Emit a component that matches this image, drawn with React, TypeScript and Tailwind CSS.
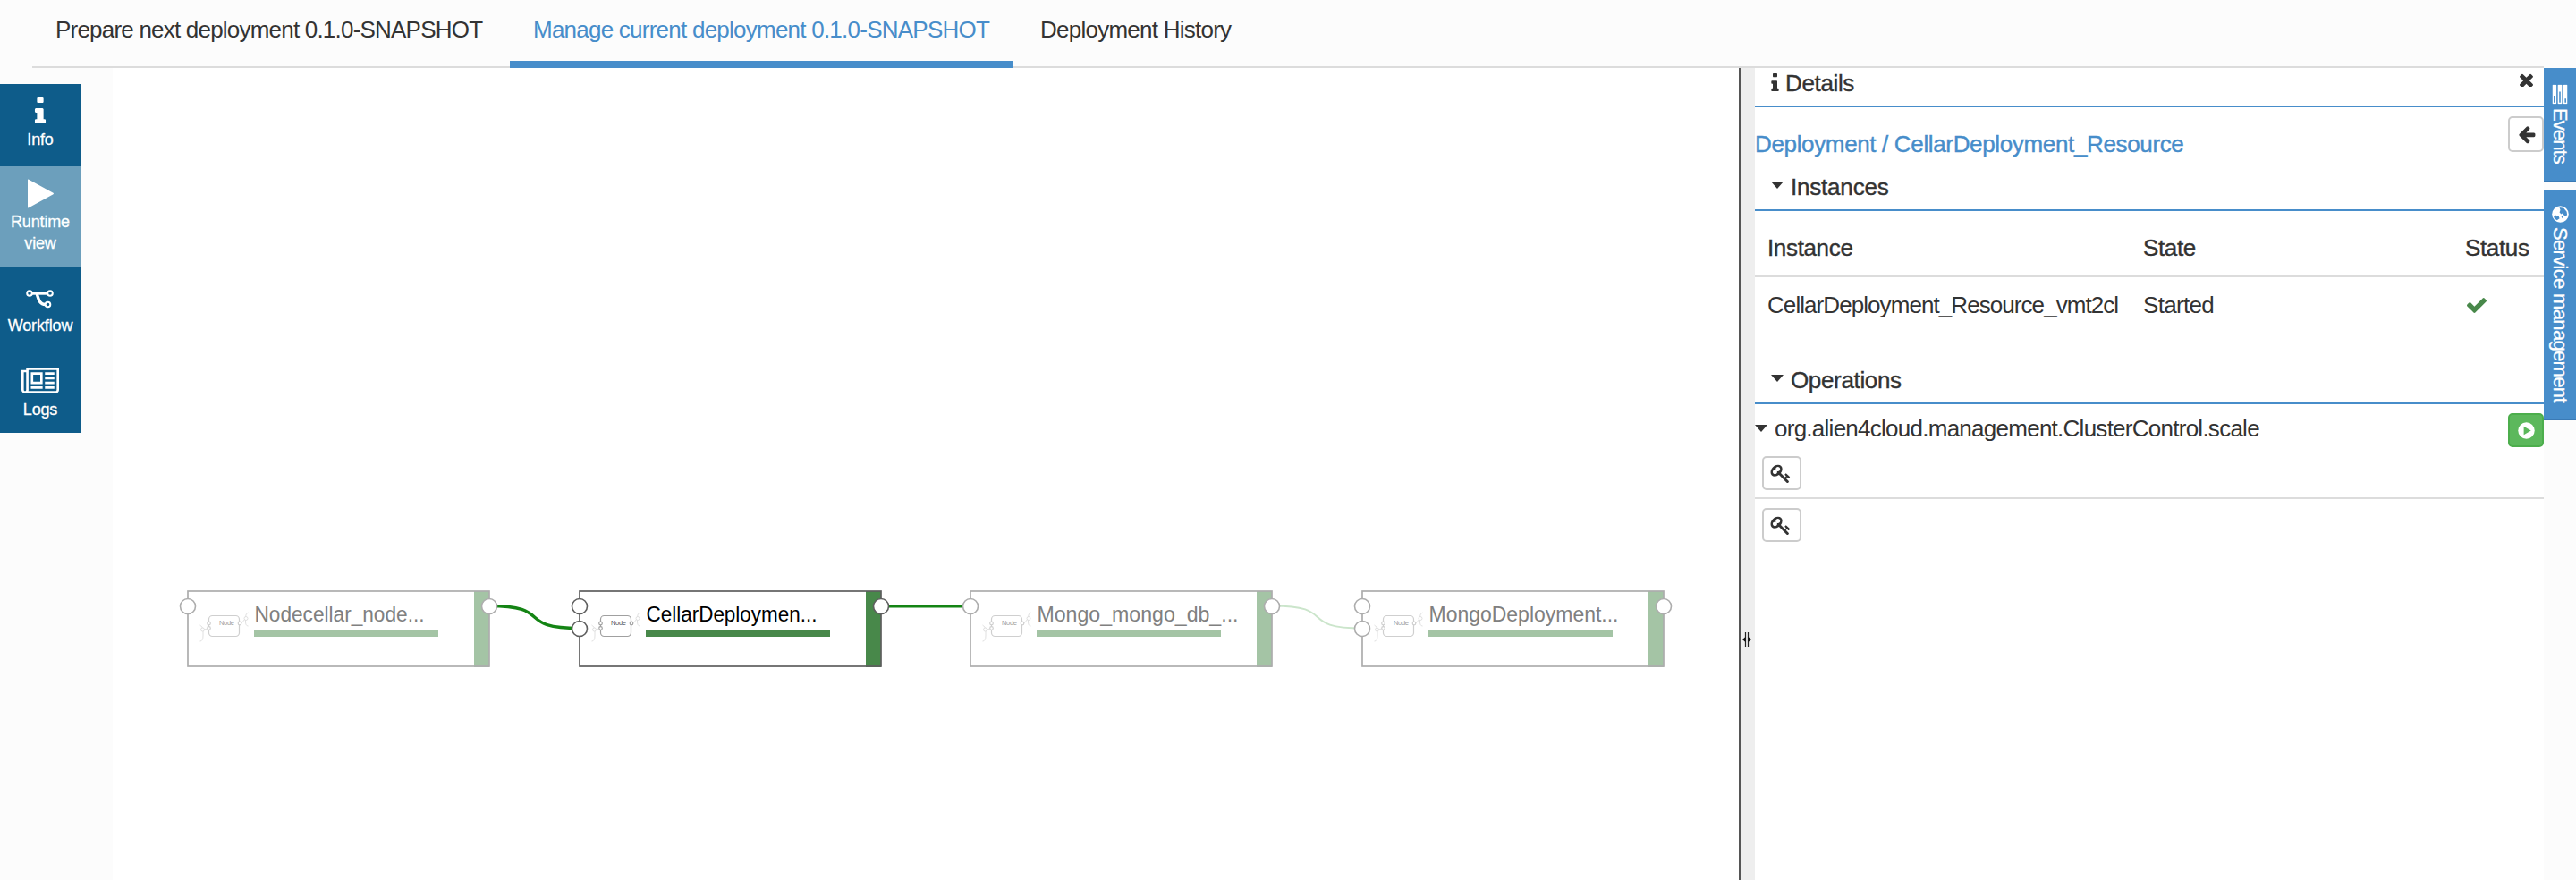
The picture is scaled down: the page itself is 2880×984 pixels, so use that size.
import React from "react";

type IconProps = { d: string; box?: string; className: string };

function Glyph({ d, box = "0 0 1792 1792", className }: IconProps) {
  return (
    <svg viewBox={box} className={className} fill="currentColor" aria-hidden="true">
      <path d={d} />
    </svg>
  );
}

const ICON = {
  info: "M640 1344v128q0 26-19 45t-45 19h-512q-26 0-45-19t-19-45v-128q0-26 19-45t45-19h64v-384h-64q-26 0-45-19t-19-45v-128q0-26 19-45t45-19h384q26 0 45 19t19 45v576h64q26 0 45 19t19 45zM512 64v192q0 26-19 45t-45 19h-256q-26 0-45-19t-19-45v-192q0-26 19-45t45-19h256q26 0 45 19t19 45z",
  close: "M1490 1322q0 40-28 68l-136 136q-28 28-68 28t-68-28l-294-294-294 294q-28 28-68 28t-68-28l-136-136q-28-28-28-68t28-68l294-294-294-294q-28-28-28-68t28-68l136-136q28-28 68-28t68 28l294 294 294-294q28-28 68-28t68 28l136 136q28 28 28 68t-28 68l-294 294 294 294q28 28 28 68z",
  back: "M1664 896v128q0 53-32.5 90.5t-84.5 37.5h-704l293 294q38 36 38 90t-38 90l-75 76q-37 37-90 37-52 0-91-37l-651-652q-37-37-37-90 0-52 37-91l651-650q38-38 91-38 52 0 90 38l75 74q38 38 38 91t-38 91l-293 293h704q52 0 84.5 37.5t32.5 90.5z",
  check: "M1671 566q0 40-28 68l-724 724-136 136q-28 28-68 28t-68-28l-136-136-362-362q-28-28-28-68t28-68l136-136q28-28 68-28t68 28l294 295 656-657q28-28 68-28t68 28l136 136q28 28 28 68z",
  play: "M1576 927l-1328 738q-23 13-39.5 3t-16.5-36v-1472q0-26 16.5-36t39.5 3l1328 738q23 13 23 31t-23 31z",
  news: "M1024 512h-384v384h384v-384zm128 640v128h-640v-128h640zm0-768v640h-640v-640h640zm640 768v128h-512v-128h512zm0-256v128h-512v-128h512zm0-256v128h-512v-128h512zm0-256v128h-512v-128h512zm-1536 960v-960h-128v960q0 26 19 45t45 19 45-19 19-45zm1664 0v-1088h-1536v1088q0 33-11 64h1483q26 0 45-19t19-45zm128-1216v1216q0 80-56 136t-136 56h-1664q-80 0-136-56t-56-136v-1088h256v-128h1792z",
  tasks: "M1024 1408h640v-128h-640v128zm-384-512h1024v-128h-1024v128zm640-512h384v-128h-384v128zm512 832v256q0 26-19 45t-45 19h-1664q-26 0-45-19t-19-45v-256q0-26 19-45t45-19h1664q26 0 45 19t19 45zm0-512v256q0 26-19 45t-45 19h-1664q-26 0-45-19t-19-45v-256q0-26 19-45t45-19h1664q26 0 45 19t19 45zm0-512v256q0 26-19 45t-45 19h-1664q-26 0-45-19t-19-45v-256q0-26 19-45t45-19h1664q26 0 45 19t19 45z",
  key: "M832 512q0-80-56-136t-136-56-136 56-56 136q0 42 19 83-41-19-83-19-80 0-136 56t-56 136 56 136 136 56 136-56 56-136q0-42-19-83 41 19 83 19 80 0 136-56t56-136zm851 704q0 17-49 66t-66 49q-9 0-28.5-16t-36.5-33-38.5-40-24.5-26l-96 96 220 220q28 28 28 68 0 42-39 81t-81 39q-40 0-68-28l-671-671q-176 131-365 131-163 0-265.5-102.5t-102.5-265.5q0-160 95-313t248-248 313-95q163 0 265.5 102.5t102.5 265.5q0 189-131 365l355 355 96-96q-3-3-26-24.5t-40-38.5-33-36.5-16-28.5q0-17 49-66t66-49q13 0 23 10 6 6 46 44.5t82 79.5 86.5 86 73 78 28.5 41z",
};

function Header() {
  return (
    <header className="flex h-[76px] bg-[#fcfcfc] pl-[36px] pr-[36px]">
      <nav className="flex flex-1 border-b-2 border-[#dcdcdc] text-[26px] leading-[30px]">
        <a className="w-[534px] whitespace-nowrap pl-[26px] pt-[18px] tracking-[-0.79px]">Prepare next deployment 0.1.0-SNAPSHOT</a>
        <a className="-mb-[2px] w-[562px] whitespace-nowrap border-b-8 border-[#478dca] pl-[26px] pt-[18px] tracking-[-0.76px] text-[#478dca]">Manage current deployment 0.1.0-SNAPSHOT</a>
        <a className="whitespace-nowrap pl-[31px] pt-[18px] tracking-[-0.75px]">Deployment History</a>
      </nav>
    </header>
  );
}

function Sidebar() {
  return (
    <aside className="w-[126px] shrink-0 bg-[#fcfcfc] pt-[18px]">
      <ul className="flex w-[90px] flex-col bg-[#0e5c8a] text-center text-[18px] leading-[24px] tracking-[-0.15px] text-white [-webkit-text-stroke:0.3px_#fff]">
        <li className="flex h-[92px] flex-col items-center pt-[15px]">
          <Glyph d={ICON.info} box="0 0 640 1536" className="h-[29px] w-[14px]" />
          <span className="mt-[6px]">Info</span>
        </li>
        <li className="flex h-[112px] flex-col items-center bg-[#6c9fbc] pt-[14px]">
          <Glyph d={ICON.play} box="192 100 1408 1592" className="h-[33px] w-[29px]" />
          <span className="mt-[3px]">Runtime<br />view</span>
        </li>
        <li className="flex h-[96px] flex-col items-center pt-[25px]">
          <svg viewBox="0 0 32 22" className="h-[22px] w-[32px]" fill="none" stroke="currentColor" strokeWidth="2">
            <circle cx="4" cy="5" r="2.8" />
            <circle cx="27" cy="5" r="2.8" />
            <circle cx="24.5" cy="17.5" r="2.8" />
            <path d="M7 5H24" strokeWidth="3.4" />
            <path d="M11 5C14 5 12.5 17.5 21.5 17.5" strokeWidth="3.4" />
          </svg>
          <span className="mt-[7px]">Workflow</span>
        </li>
        <li className="flex h-[90px] flex-col items-center pt-[17px]">
          <Glyph d={ICON.news} box="0 128 2048 1408" className="h-[29px] w-[42px]" />
          <span className="mt-[6px]">Logs</span>
        </li>
      </ul>
    </aside>
  );
}

type TopologyNode = { name: string; x: number; active?: boolean; ports: number; nameWidth: number };

const NODES: TopologyNode[] = [
  { name: "Nodecellar_node...", x: 210, ports: 1, nameWidth: 190 },
  { name: "CellarDeploymen...", x: 648, ports: 2, active: true, nameWidth: 191 },
  { name: "Mongo_mongo_db_...", x: 1085, ports: 1, nameWidth: 225 },
  { name: "MongoDeployment...", x: 1523, ports: 2, nameWidth: 212 },
];

function NodeFigure({ node }: { node: TopologyNode }) {
  const line = node.active ? "#5f5f5f" : "#adadad";
  const green = node.active ? "#48884a" : "#a4c4a5";
  const thin = node.active ? "#a0a0a0" : "#cfcfcf";
  return (
    <g transform={`translate(${node.x} 661)`}>
      <rect x="320" y="0" width="17" height="85" fill={green} />
      <rect x="0" y="0" width="337" height="84" fill="none" stroke={line} strokeWidth="1.7" />
      <g fill="none" stroke={thin} strokeWidth="1.2">
        <rect x="23.5" y="27.5" width="34" height="23" rx="4" />
        <g fill="#fff">
          <circle cx="23.5" cy="36" r="1.8" />
          <circle cx="23.5" cy="41.500" r="1.8" />
          <circle cx="58" cy="36" r="1.8" />
        </g>
        <g stroke="#dcdcdc" strokeWidth="0.9">
          <path d="M22 42L18 43M13.500 38Q17 40 17 43V50Q17 56 13.500 56" />
          <circle cx="16.500" cy="43" r="2" fill="#fff" />
          <path d="M60 36L64 31M67.500 24Q64.500 25 64.500 29V34Q64.500 39 67.500 39" />
          <circle cx="65" cy="30.500" r="2" fill="#fff" />
        </g>
      </g>
      <text x="35" y="38" fontSize="7.5" fill={node.active ? "#555" : "#a0a0a0"} textLength="17">Node</text>
      <text x="74.500" y="34" fontSize="24.500" fill={node.active ? "#000" : "#808080"} textLength={node.nameWidth} lengthAdjust="spacingAndGlyphs">{node.name}</text>
      <rect x="74" y="44" width="206" height="7" fill={green} />
      {Array.from({ length: node.ports }, (_, i) => (
        <circle key={i} cx="0" cy={17 + i * 25} r="8.500" fill="#fff" stroke={line} strokeWidth="1.6" />
      ))}
      <circle cx="337" cy="17" r="8.500" fill="#fff" stroke={line} strokeWidth="1.6" />
    </g>
  );
}

function Topology() {
  return (
    <main className="w-[1818px] shrink-0 bg-white">
      <svg viewBox="126 76 1818 908" className="block h-[908px] w-[1818px]">
        <g fill="none">
          <path d="M547 677.500C620 677.500 575 702.500 648 702.500" stroke="#148414" strokeWidth="3.400" />
          <path d="M985 677.800H1086" stroke="#148414" strokeWidth="3.400" />
          <path d="M1423 677.500C1496 677.500 1450 702.500 1523 702.500" stroke="#cbe5cb" strokeWidth="2" />
        </g>
        {NODES.map((n) => (
          <NodeFigure key={n.name} node={n} />
        ))}
      </svg>
    </main>
  );
}

function Splitter() {
  return (
    <div className="flex w-[18px] shrink-0 items-start justify-center border-l-2 border-[#555] bg-[#eee] pr-[2px] pt-[630px]">
      <svg viewBox="0 0 10 18" className="h-[18px] w-[10px] shrink-0">
        <path d="M3.500 1V17M6.500 1V17" stroke="#222" strokeWidth="1.200" />
        <path d="M3.500 6L0 9L3.500 12ZM6.500 6L10 9L6.500 12Z" fill="#111" />
      </svg>
    </div>
  );
}

function Caret({ className = "" }: { className?: string }) {
  return (
    <svg viewBox="0 0 14 8" className={`h-[8px] w-[14px] shrink-0 ${className}`} fill="currentColor">
      <path d="M0 0H14L7 8Z" />
    </svg>
  );
}

function KeyButton() {
  return (
    <button className="flex h-[38px] w-[44px] items-center justify-center rounded-[5px] border-2 border-[#ccc] bg-white">
      <Glyph d={ICON.key} className="h-[23px] w-[24px] -translate-x-px" />
    </button>
  );
}

function Details() {
  return (
    <section className="flex w-[882px] shrink-0 flex-col bg-white text-[26px] leading-[30px] tracking-[-0.35px]">
      <div className="flex h-[44px] border-b-2 border-[#478dca] pl-[18px] pr-[12px]">
        <Glyph d={ICON.info} box="0 0 640 1536" className="mt-[6px] h-[20px] w-[9px]" />
        <h2 className="ml-[7px] mt-[2px] [-webkit-text-stroke:0.4px_#333]">Details</h2>
        <Glyph d={ICON.close} box="302 302 1188 1188" className="ml-auto mt-[6px] h-[15px] w-[15px]" />
      </div>
      <div className="flex h-[72px] justify-between">
        <p className="mt-[26px] text-[#478dca] [-webkit-text-stroke:0.4px_#478dca]">Deployment / CellarDeployment_Resource</p>
        <button className="mt-[10px] flex h-[40px] w-[40px] items-center justify-center rounded-[5px] border-2 border-[#ccc] bg-white">
          <Glyph d={ICON.back} className="h-[22px] w-[22px] shrink-0 translate-x-px" />
        </button>
      </div>
      <div className="flex h-[44px] border-b-2 border-[#478dca] pl-[18px]">
        <Caret className="mt-[11px]" />
        <h3 className="ml-[8px] mt-[2px] tracking-[-0.2px] [-webkit-text-stroke:0.4px_#333]">Instances</h3>
      </div>
      <div className="flex h-[74px] border-b-2 border-[#dcdcdc] pl-[14px] pt-[26px] [-webkit-text-stroke:0.4px_#333]">
        <span className="w-[420px]">Instance</span>
        <span className="w-[360px]">State</span>
        <span>Status</span>
      </div>
      <div className="flex h-[100px] pl-[14px] pt-[16px]">
        <span className="w-[420px] tracking-[-0.93px]">CellarDeployment_Resource_vmt2cl</span>
        <span className="w-[362px] tracking-[-0.7px]">Started</span>
        <Glyph d={ICON.check} box="121 334 1550 1188" className="mt-[7px] h-[17px] w-[22px] text-[#48884a]" />
      </div>
      <div className="flex h-[42px] border-b-2 border-[#478dca] pl-[18px]">
        <Caret className="mt-[9px]" />
        <h3 className="ml-[8px] [-webkit-text-stroke:0.4px_#333]">Operations</h3>
      </div>
      <div className="flex h-[56px] justify-between">
        <div className="flex">
          <Caret className="mt-[23px]" />
          <span className="ml-[8px] mt-[12px] tracking-[-0.74px]">org.alien4cloud.management.ClusterControl.scale</span>
        </div>
        <button className="mt-[10px] flex h-[38px] w-[40px] items-center justify-center rounded-[5px] border-2 border-[#4cae4c] bg-[#5cb85c]">
          <svg viewBox="0 0 20 20" className="h-[19px] w-[19px]">
            <circle cx="10" cy="10" r="9.700" fill="#fff" />
            <path d="M7 5L15.500 10L7 15Z" fill="#5cb85c" />
          </svg>
        </button>
      </div>
      <div className="h-[50px] border-b-2 border-[#dcdcdc] pl-[8px] pt-[2px]">
        <KeyButton />
      </div>
      <div className="pl-[8px] pt-[10px]">
        <KeyButton />
      </div>
    </section>
  );
}

function SideTabs() {
  return (
    <aside className="flex w-[36px] shrink-0 flex-col gap-[8px] bg-[#fcfcfc] text-[22px] leading-[26px] text-white [-webkit-text-stroke:0.3px_#fff]">
      <div className="flex h-[128px] flex-col items-center border-b-2 border-[#3a7ab5] bg-[#478dca] pt-[18px]">
        <Glyph d={ICON.tasks} box="0 128 1792 1408" className="h-[17px] w-[22px] shrink-0 translate-y-[3px] rotate-90" />
        <span className="mt-[10px] tracking-[-0.9px] [writing-mode:vertical-rl]">Events</span>
      </div>
      <div className="flex h-[258px] flex-col items-center border-b-2 border-[#3a7ab5] bg-[#478dca] pt-[18px]">
        <svg viewBox="0 0 20 20" className="h-[19px] w-[19px] shrink-0">
          <circle cx="10" cy="10" r="9.800" fill="#fff" />
          <path d="M9 2L14 3L17.500 7L18 11L15 12L12.500 9L11 10L9 8L10 5ZM2 12L4.500 11L6 13L8 12L9 15L6 17L3 15ZM11 12L13 13L12 15Z" fill="#478dca" />
        </svg>
        <span className="mt-[5px] whitespace-nowrap tracking-[-0.67px] [writing-mode:vertical-rl]">Service management</span>
      </div>
    </aside>
  );
}

export default function App() {
  return (
    <div className="flex h-[984px] w-[2880px] flex-col overflow-hidden bg-[#fcfcfc] font-['Liberation_Sans',Arial,sans-serif] text-[#333]">
      <Header />
      <div className="flex h-[908px]">
        <Sidebar />
        <Topology />
        <Splitter />
        <Details />
        <SideTabs />
      </div>
    </div>
  );
}
